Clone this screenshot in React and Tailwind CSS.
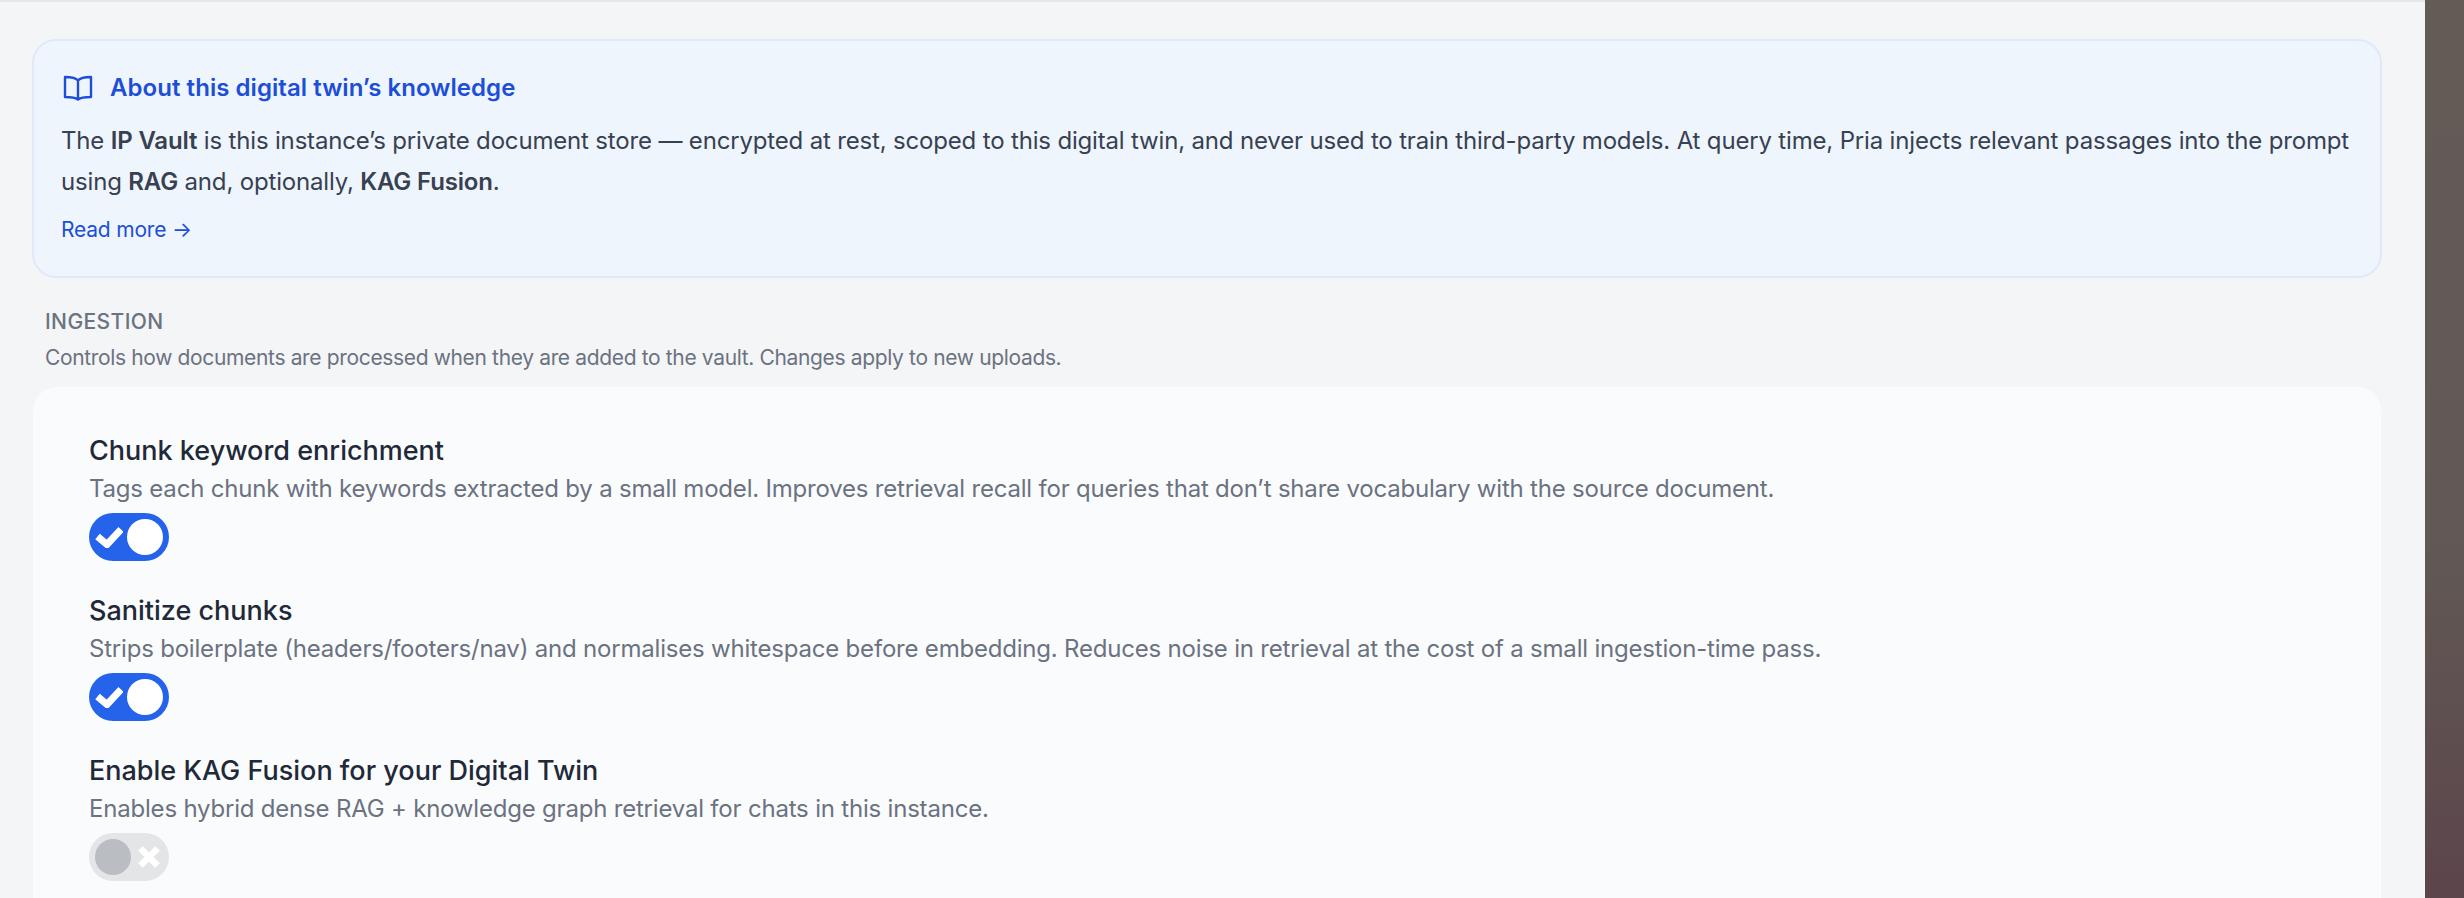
import React from "react";

const settings = [
  {
    title: "Chunk keyword enrichment",
    description:
      "Tags each chunk with keywords extracted by a small model. Improves retrieval recall for queries that don’t share vocabulary with the source document.",
    on: true,
  },
  {
    title: "Sanitize chunks",
    description:
      "Strips boilerplate (headers/footers/nav) and normalises whitespace before embedding. Reduces noise in retrieval at the cost of a small ingestion-time pass.",
    on: true,
  },
  {
    title: "Enable KAG Fusion for your Digital Twin",
    description:
      "Enables hybrid dense RAG + knowledge graph retrieval for chats in this instance.",
    on: false,
  },
];

const Toggle = ({ on }) =>
  on ? (
    <div className="flex h-12 w-20 items-center justify-between rounded-full bg-[#2563eb] pl-[6px] pr-[6px]">
      <svg viewBox="0 0 28 22" className="h-[22px] w-7">
        <path d="M2.5 10.5l9.5 8L26 3.5" fill="none" stroke="white" strokeWidth="7" />
      </svg>
      <div className="h-9 w-9 rounded-full bg-white" />
    </div>
  ) : (
    <div className="flex h-12 w-20 items-center justify-between rounded-full bg-[#e4e5e7] pl-[6px] pr-[9px]">
      <div className="h-9 w-9 rounded-full bg-[#babdc2]" />
      <svg viewBox="0 0 22 22" className="h-[22px] w-[22px]">
        <path d="M2.5 2.5l17 17M19.5 2.5l-17 17" fill="none" stroke="white" strokeWidth="6.5" />
      </svg>
    </div>
  );

const SettingRow = ({ title, description, on }) => (
  <div className="flex h-40 flex-col">
    <h4 className="text-[27px] leading-[40px] font-medium text-[#1f2937]">{title}</h4>
    <p className="mb-[6px] text-[24px] leading-[36px] tracking-[-0.2px] text-[#6b7280]">{description}</p>
    <Toggle on={on} />
  </div>
);

export default function App() {
  return (
    <div className="flex h-[898px] overflow-hidden font-['Inter',sans-serif]">
      <main className="flex-1 border-t-2 border-[#e5e7eb] bg-[#f4f5f7] pl-8 pr-[43px] pt-[37px]">
        <section className="h-[239px] rounded-[24px] border-2 border-[#e0e9f7] bg-[#eff5fd] pl-[27px] pr-5 pt-[29px]">
          <div className="flex items-center gap-[17px]">
            <svg viewBox="0 0 30 26" className="ml-[2px] h-[26px] w-[30px] text-[#1d4ed8]" fill="none" stroke="currentColor" strokeWidth="2.4" strokeLinejoin="round">
              <path d="M15 5.5C13 3 9.5 2 2 2v20c7.5 0 11 1 13 2.5 2-1.5 5.5-2.5 13-2.5V2c-7.5 0-11 1-13 3.5zM15 5.5v19" />
            </svg>
            <h3 className="text-[24px] leading-[36px] font-semibold tracking-[0.05px] text-[#1d4ed8]">
              About this digital twin’s knowledge
            </h3>
          </div>
          <p className="mt-[14px] text-[24px] leading-[41px] tracking-[-0.17px] text-[#374151]">
            The <strong className="font-semibold">IP Vault</strong> is this instance’s private document store —
            encrypted at rest, scoped to this digital twin, and never used to train third-party models. At query
            time, Pria injects relevant passages into the prompt using <strong className="font-semibold">RAG</strong>{" "}
            and, optionally, <strong className="font-semibold">KAG Fusion</strong>.
          </p>
          <a className="mt-[13px] block text-[21px] leading-[30px] tracking-[-0.2px] text-[#1d4ed8]">Read more →</a>
        </section>

        <div className="mt-[29px] pl-[13px]">
          <h2 className="text-[21px] leading-[30px] font-medium tracking-[0.4px] text-[#6b7280]">INGESTION</h2>
          <p className="mt-[6px] text-[21px] leading-[30px] tracking-[-0.35px] text-[#6b7280]">
            Controls how documents are processed when they are added to the vault. Changes apply to new uploads.
          </p>
        </div>

        <section className="mx-px mt-[14px] h-[600px] rounded-[24px] bg-[#fafbfd] px-14 pt-[44px]">
          {settings.map((s) => (
            <SettingRow key={s.title} {...s} />
          ))}
        </section>
      </main>
      <div className="w-[39px] bg-linear-to-b from-[#645b57] via-[#615955] via-60% to-[#5c454b]" />
    </div>
  );
}
